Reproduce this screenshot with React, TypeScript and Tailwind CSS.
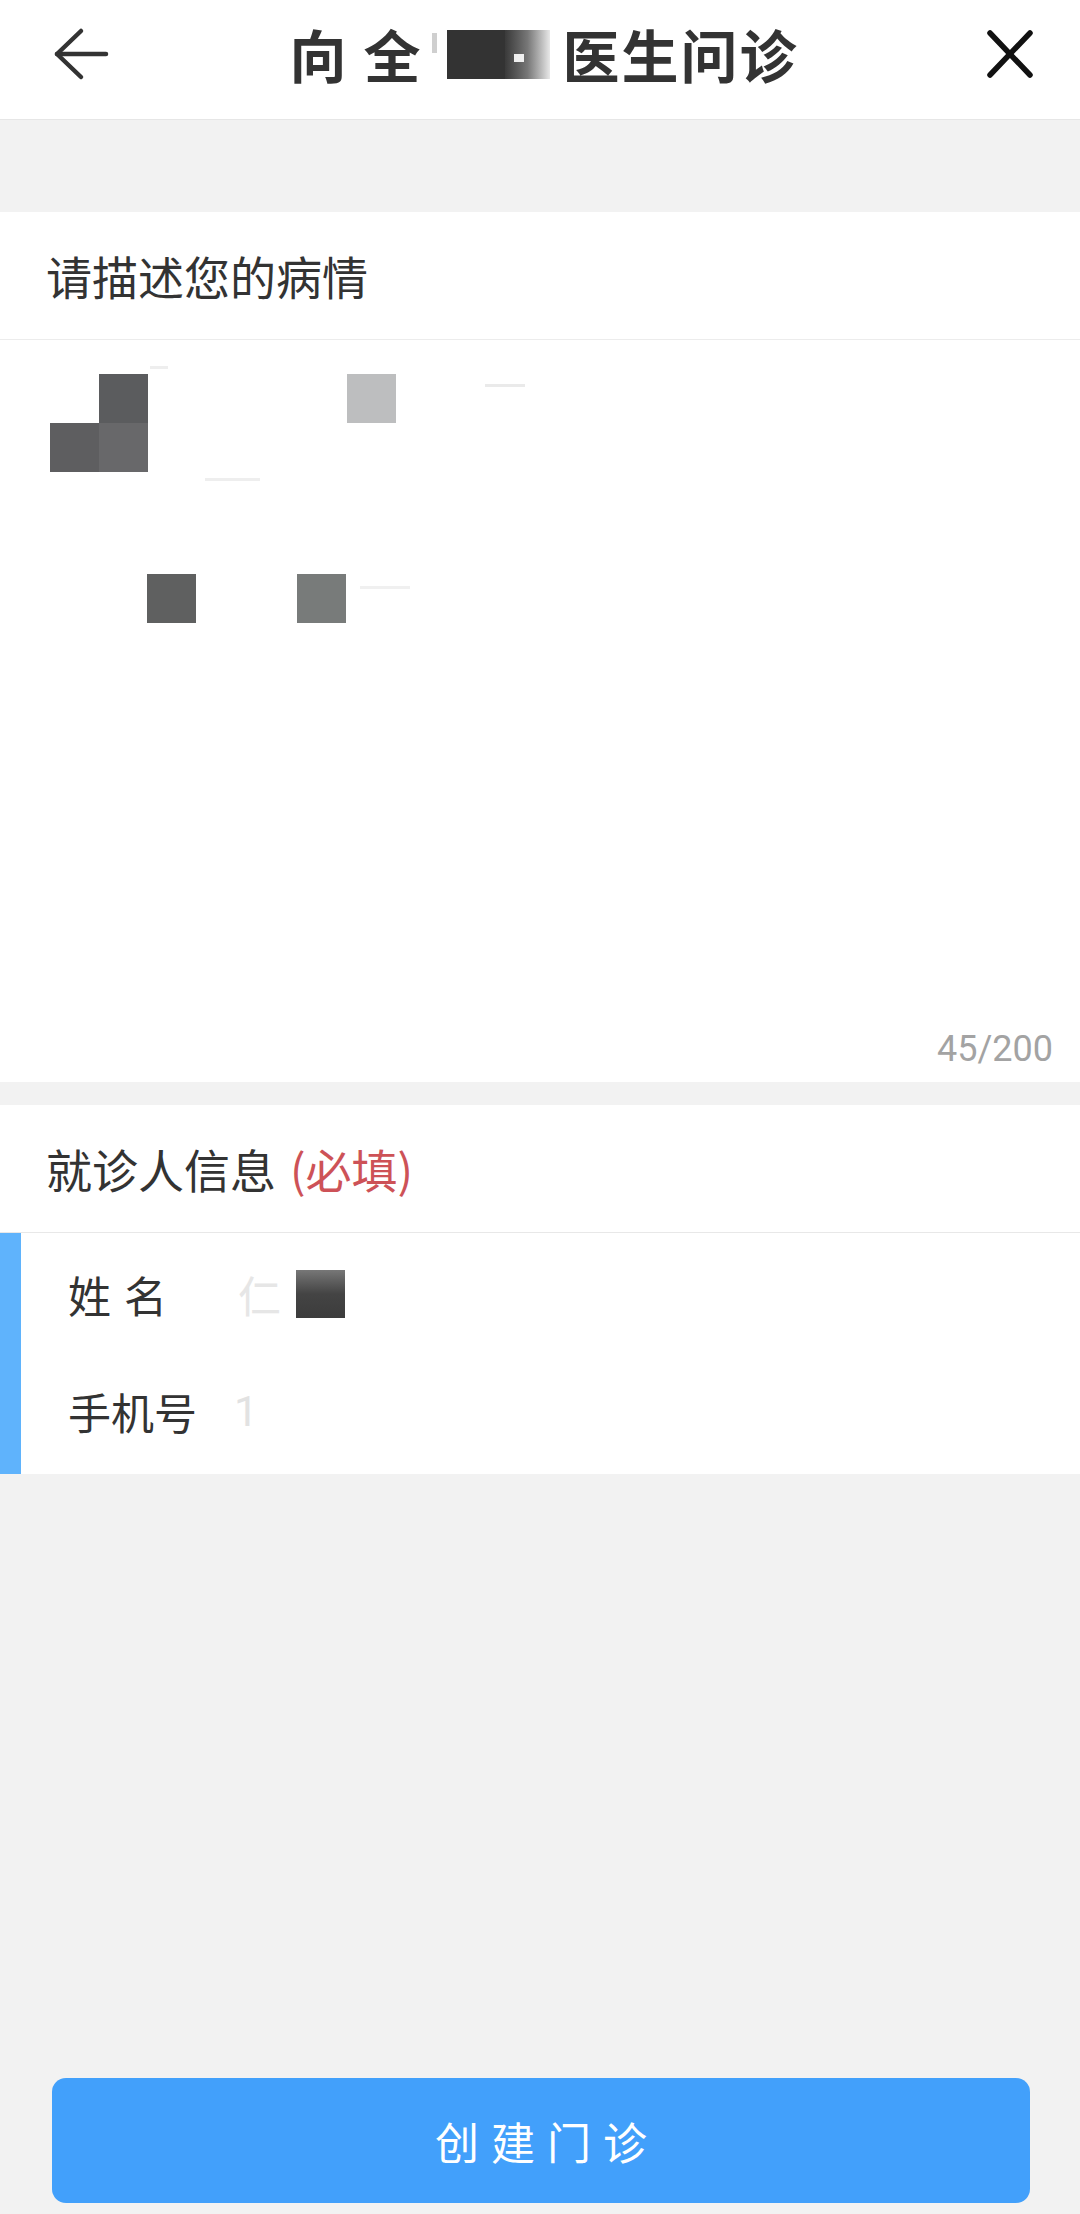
const cjk = { fontFamily: '"Noto Sans CJK SC", "Noto Sans", sans-serif' };

const BackArrow = () => (
  <svg width="60" height="60" viewBox="0 0 60 60" fill="none" stroke="#333" strokeWidth="4.5" strokeLinecap="round" strokeLinejoin="round">
    <path d="M5 30 H54" />
    <path d="M29 7 L5 30 L29 53" />
  </svg>
);

const CloseIcon = () => (
  <svg width="48" height="48" viewBox="0 0 48 48" fill="none" stroke="#111" strokeWidth="5.5" strokeLinecap="round">
    <path d="M4 3 L44 45" />
    <path d="M44 3 L4 45" />
  </svg>
);

// grey mosaic blocks that hide the typed complaint
const blocks = [
  { cls: 'left-[99px] top-[34px] bg-[#5b5c5e]' },
  { cls: 'left-[50px] top-[83px] bg-[#5e5e60]' },
  { cls: 'left-[99px] top-[83px] bg-[#68686a]' },
  { cls: 'left-[347px] top-[34px] bg-[#bdbebf]' },
  { cls: 'left-[147px] top-[234px] bg-[#5f6060]' },
  { cls: 'left-[297px] top-[234px] bg-[#787b7a]' },
];

export default function App() {
  return (
    <div className="min-h-[2214px] w-[1080px] flex flex-col bg-[#f2f2f2]" style={cjk}>
      <header className="h-[120px] bg-white border-b border-[#e6e6e6] flex items-center justify-between pl-[52px] pr-[40px] pb-[12px]">
        <button className="w-[60px] h-[60px] flex items-center justify-center">
          <BackArrow />
        </button>
        <h1 className="flex items-center text-[57px] font-bold text-[#333] leading-none tracking-[2px] -ml-[4px]">
          <span>向 全</span>
          <span className="relative w-[140px] h-[57px] flex items-end">
            <span className="absolute left-[10px] top-[8px] w-[5px] h-[20px] bg-[#cfcfcf]"></span>
            <span className="absolute left-[25px] top-[5px] w-[58px] h-[49px] bg-[#333]"></span>
            <span className="absolute left-[83px] top-[5px] w-[45px] h-[49px] bg-gradient-to-r from-[#3a3a3a] via-[#777] to-[#e8e8e8]"></span>
            <span className="absolute left-[92px] top-[29px] w-[10px] h-[8px] bg-white/90"></span>
          </span>
          <span>医生问诊</span>
        </h1>
        <button className="w-[60px] h-[60px] flex items-center justify-center">
          <CloseIcon />
        </button>
      </header>

      <div className="h-[92px]"></div>

      <section className="bg-white">
        <div className="h-[128px] flex items-center px-[46px] border-b border-[#ececec] text-[46px] text-[#333]">
          请描述您的病情
        </div>
        <div className="h-[742px] relative flex items-end justify-end pr-[27px] pb-[15px]">
          {blocks.map((b, i) => (
            <span key={i} className={`absolute w-[49px] h-[49px] ${b.cls}`}></span>
          ))}
          <span className="absolute left-[150px] top-[26px] w-[18px] h-[3px] bg-[#eeeeee]"></span>
          <span className="absolute left-[205px] top-[138px] w-[55px] h-[3px] bg-[#eeeeee]"></span>
          <span className="absolute left-[485px] top-[44px] w-[40px] h-[3px] bg-[#eaeaea]"></span>
          <span className="absolute left-[360px] top-[246px] w-[50px] h-[3px] bg-[#f0f0f0]"></span>
          <span className="text-[36px] leading-none text-[#a3a3a3]" style={{ fontFamily: 'Roboto, "Noto Sans", sans-serif' }}>
            45/200
          </span>
        </div>
      </section>

      <div className="h-[23px]"></div>

      <section className="bg-white">
        <div className="h-[128px] flex items-center px-[46px] border-b border-[#e8e8e8] text-[46px] text-[#333]">
          就诊人信息<span className="ml-[14px] text-[#cd5257]">(必填)</span>
        </div>
        <div className="flex h-[241px]">
          <div className="w-[21px] bg-[#5fb3fc]"></div>
          <div className="flex-1 flex flex-col pl-[47px] pt-[6px] text-[43px] text-[#333]">
            <div className="h-[110px] flex items-center">
              <span className="w-[170px] flex">
                <span>姓</span>
                <span className="ml-[13px]">名</span>
              </span>
              <span className="text-[#e6e6e6]">仁</span>
              <span className="ml-[15px] w-[49px] h-[48px] bg-gradient-to-b from-[#777] via-[#444] to-[#3c3c3c]"></span>
            </div>
            <div className="h-[124px] flex items-center">
              <span className="w-[166px]">手机号</span>
              <span className="text-[#e2e2e2]" style={{ fontFamily: 'Roboto, sans-serif' }}>1</span>
            </div>
          </div>
        </div>
      </section>

      <div className="flex-1"></div>

      <div className="px-[52px] pb-[11px]">
        <button className="w-[978px] h-[125px] rounded-[14px] bg-[#42a0fb] text-white text-[44px] tracking-[12px] pl-[12px] flex items-center justify-center">
          创建门诊
        </button>
      </div>
    </div>
  );
}
